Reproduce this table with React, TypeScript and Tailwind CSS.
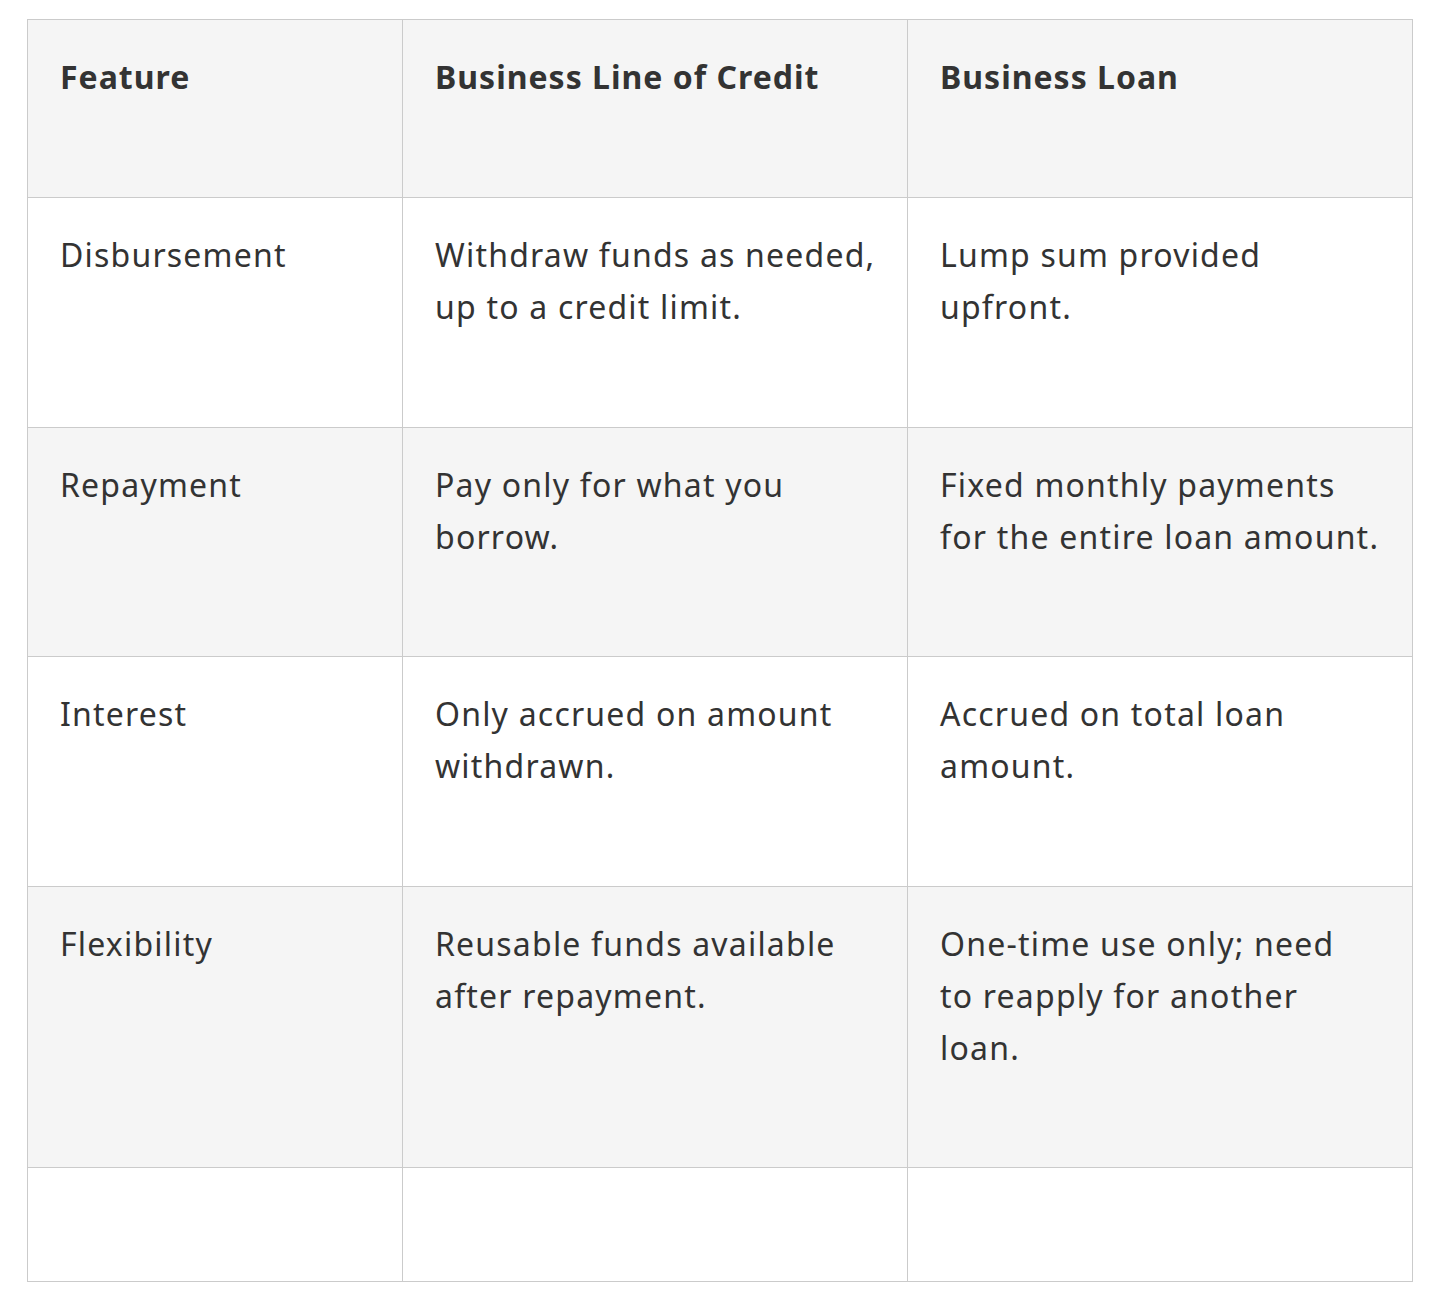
import React from "react";

const rows: string[][][] = [
  [["Disbursement"], ["Withdraw funds as needed,", "up to a credit limit."], ["Lump sum provided", "upfront."]],
  [["Repayment"], ["Pay only for what you", "borrow."], ["Fixed monthly payments", "for the entire loan amount."]],
  [["Interest"], ["Only accrued on amount", "withdrawn."], ["Accrued on total loan", "amount."]],
  [["Flexibility"], ["Reusable funds available", "after repayment."], ["One-time use only; need", "to reapply for another", "loan."]],
];

export default function App() {
  return (
    <div className="min-h-[1303px] bg-white pl-[27px] pt-[19px]" style={{ fontFamily: '"Noto Sans", "Open Sans", sans-serif' }}>
      <table className="w-[1386px] table-fixed border-collapse text-[32px] leading-[52px] tracking-[1.2px] text-[#333333]">
        <colgroup>
          <col className="w-[375px]" />
          <col className="w-[505px]" />
          <col className="w-[505px]" />
        </colgroup>
        <thead>
          <tr className="h-[178px] bg-[#f5f5f5]">
            {["Feature", "Business Line of Credit", "Business Loan"].map((h) => (
              <th key={h} className="border border-[#cbcbcb] px-8 pt-[31px] pb-[94px] text-left align-top font-bold tracking-[1px]">
                {h}
              </th>
            ))}
          </tr>
        </thead>
        <tbody>
          {rows.map((r, i) => (
            <tr key={i} className={i % 2 === 0 ? "bg-white" : "bg-[#f5f5f5]"}>
              {r.map((lines, j) => (
                <td
                  key={j}
                  className={
                    i % 2 === 0
                      ? "border border-[#cbcbcb] px-8 pt-[31px] pb-[94px] align-top whitespace-nowrap"
                      : "border border-[#cbcbcb] px-8 pt-[31px] pb-[93px] align-top whitespace-nowrap"
                  }
                >
                  {lines.map((l, k) => (
                    <div key={k}>{l}</div>
                  ))}
                </td>
              ))}
            </tr>
          ))}
          <tr className="h-[114px] bg-white">
            <td className="border border-[#cbcbcb]"></td>
            <td className="border border-[#cbcbcb]"></td>
            <td className="border border-[#cbcbcb]"></td>
          </tr>
        </tbody>
      </table>
    </div>
  );
}
